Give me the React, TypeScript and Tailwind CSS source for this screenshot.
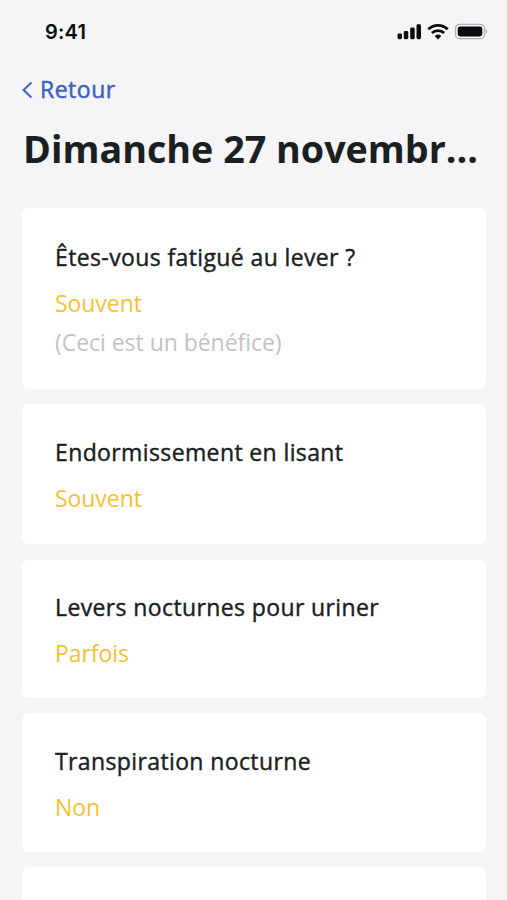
import React from 'react';

interface Answer {
  question: string;
  value: string;
  note?: string;
  cardClass: string;
}

const answers: Answer[] = [
  { question: 'Êtes-vous fatigué au lever ?', value: 'Souvent', note: '(Ceci est un bénéfice)', cardClass: 'h-[181px] mb-[15px] pt-[33px]' },
  { question: 'Endormissement en lisant', value: 'Souvent', cardClass: 'h-[140px] mb-[16px] pt-[32px]' },
  { question: 'Levers nocturnes pour uriner', value: 'Parfois', cardClass: 'h-[138px] mb-[15px] pt-[31px]' },
  { question: 'Transpiration nocturne', value: 'Non', cardClass: 'h-[139px] mb-[15px] pt-[32px]' },
];

function StatusBar() {
  return (
    <div className="flex h-[62px] items-center justify-between pl-[45px] pr-[19px] text-[#090b0c]">
      <span className="pt-px font-['Inter',sans-serif] text-[20px] font-semibold leading-6 tracking-[0.2px]">9:41</span>
      <svg width="91" height="18" viewBox="0 0 91 18" fill="currentColor">
        <rect x="0.5" y="11.5" width="4.5" height="5.7" rx="1.4" />
        <rect x="6.8" y="9" width="4.5" height="8.2" rx="1.4" />
        <rect x="13.2" y="5.6" width="4.5" height="11.6" rx="1.4" />
        <rect x="19.5" y="2.3" width="4.5" height="14.9" rx="1.4" />
        <g fill="none" stroke="currentColor" strokeWidth="2.8">
          <path d="M31.3 7.3a14 14 0 0 1 19.4 0" />
          <path d="M34.9 11.1a8.8 8.8 0 0 1 12.2 0" />
        </g>
        <path d="M37.7 14a5 5 0 0 1 6.6 0L41 17.4z" />
        <rect x="58.5" y="2.3" width="29" height="14.4" rx="4.3" fill="none" stroke="#b0b1b3" strokeWidth="1.3" />
        <rect x="60.7" y="4.5" width="24.6" height="10" rx="2.4" />
        <path d="M88.7 7v5a2.8 2.8 0 0 0 0-5z" fill="#b0b1b3" />
      </svg>
    </div>
  );
}

function AnswerCard({ question, value, note, cardClass }: Answer) {
  return (
    <section className={`rounded-[7px] bg-white px-[33px] ${cardClass}`}>
      <h2 className="text-[23px] leading-8 tracking-[0.38px] [-webkit-text-stroke:0.4px_#1a2022]">{question}</h2>
      <p className="mt-[14px] text-[23px] leading-8 tracking-[-0.06px] text-[#f5c035]">{value}</p>
      {note && <p className="mt-[7px] text-[23px] leading-8 tracking-[-0.04px] text-[#c2c2c4]">{note}</p>}
    </section>
  );
}

export default function App() {
  return (
    <div className="h-screen overflow-hidden bg-[#f5f5f8] font-['Open_Sans',sans-serif] text-[#1a2022]">
      <StatusBar />
      <main className="pl-[22px] pr-[21px]">
        <button className="flex h-[55px] items-center text-[23px] tracking-[0.5px] text-[#3d62c4] [-webkit-text-stroke:0.5px_#3d62c4]">
          <svg className="mr-[7px]" width="11" height="18" viewBox="0 0 11 18" fill="none" stroke="currentColor" strokeWidth="2">
            <path d="M9.4 1.6 1.6 9l7.8 7.4" />
          </svg>
          Retour
        </button>
        <h1 className="mb-[29px] mt-[2px] whitespace-nowrap pl-px text-[37.7px] font-bold leading-[60px]">Dimanche 27 novembr...</h1>
        {answers.map((answer) => (
          <AnswerCard key={answer.question} {...answer} />
        ))}
        <div className="h-[80px] rounded-[7px] bg-white" />
      </main>
    </div>
  );
}
